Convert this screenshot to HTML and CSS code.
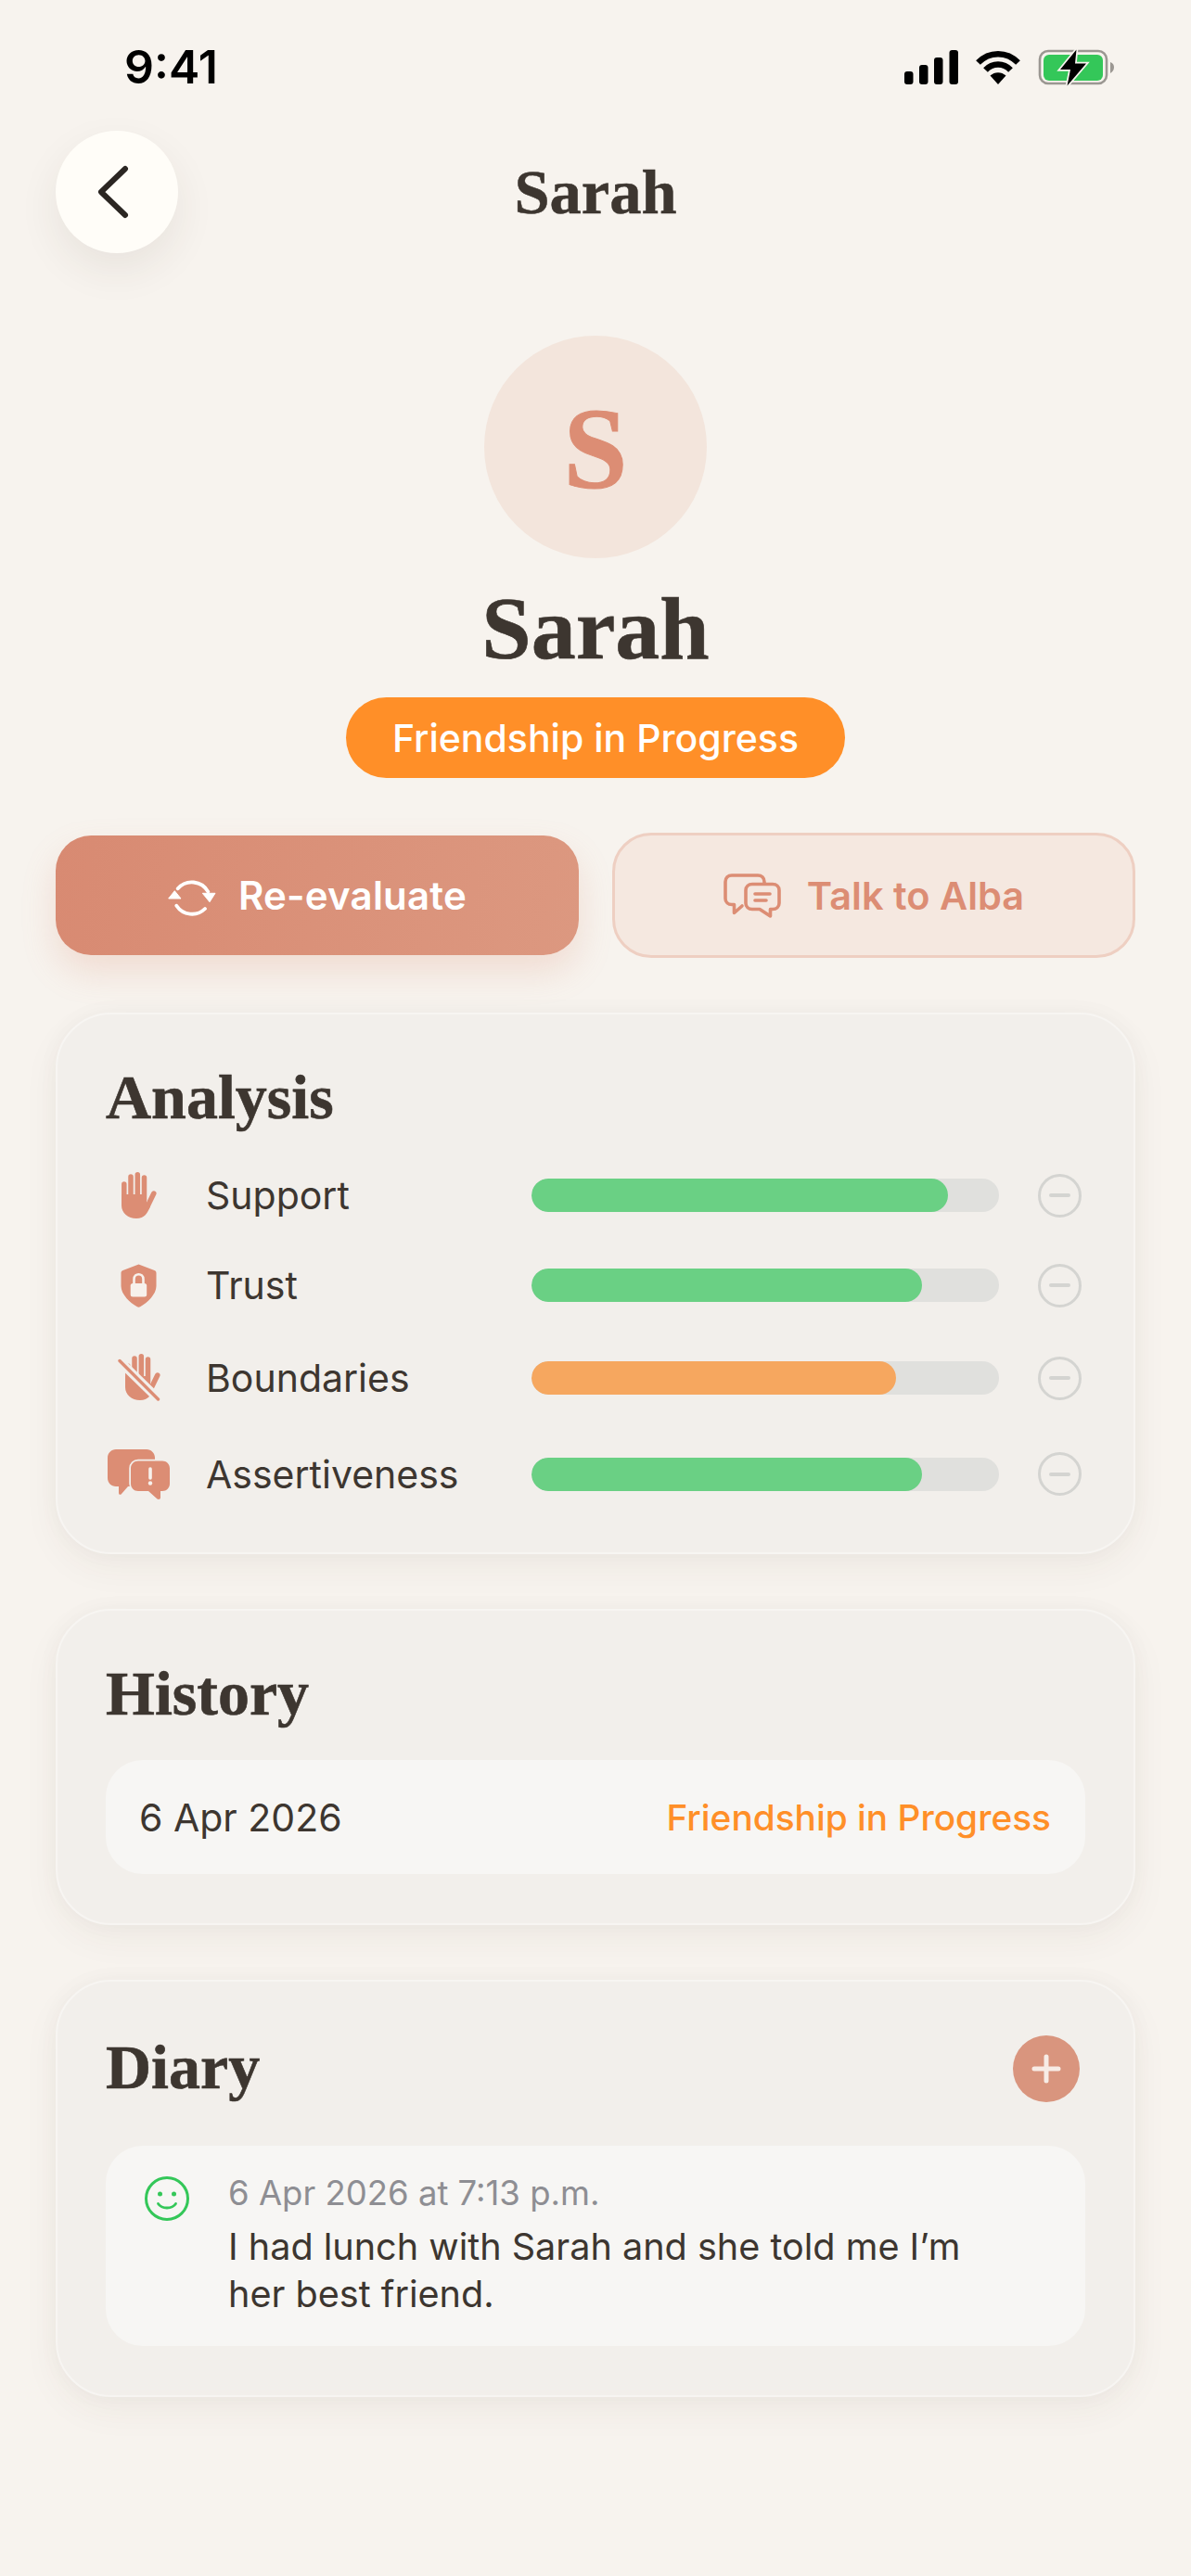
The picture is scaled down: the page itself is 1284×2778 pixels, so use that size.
FILE: index.html
```html
<!DOCTYPE html>
<html lang="en">
<head>
    <meta charset="UTF-8">
    <title>Sarah</title>
    <link rel="stylesheet" href="styles.css">
</head>
<body>

<div class="page">

    <!-- Status bar -->
    <div class="status">
        <span class="time">9:41</span>
        <div class="status-icons">
            <svg class="signal" viewBox="0 0 58 37">
                <rect x="0" y="23" width="9.5" height="14" rx="3"/>
                <rect x="16" y="16" width="9.5" height="21" rx="3"/>
                <rect x="32" y="8" width="9.5" height="29" rx="3"/>
                <rect x="48.5" y="0" width="9.5" height="37" rx="3"/>
            </svg>
            <svg class="wifi" viewBox="0 0 50 37">
                <path d="M3.5 13.5C15.5 1 34.5 1 46.5 13.5" fill="none" stroke="#000" stroke-width="6.5"/>
                <path d="M11.5 21.5C19 13.5 31 13.5 38.5 21.5" fill="none" stroke="#000" stroke-width="6.5"/>
                <path d="M25 37L16.5 27.5C21.5 23 28.5 23 33.5 27.5Z"/>
            </svg>
            <svg class="battery" viewBox="0 0 84 44">
                <rect x="2" y="5" width="72" height="35" rx="9" fill="none" stroke="#9b9792" stroke-width="2.6"/>
                <rect x="6" y="9" width="64" height="28" rx="6" fill="#34c759"/>
                <path d="M78 17C81 18 82 20 82 22.5S81 27 78 29Z" fill="#9b9792"/>
                <path d="M41.5 3.5L24 25H35L31.5 42.5L52 18.5H40Z" stroke="#f7f3ee" stroke-width="3.5" paint-order="stroke"/>
            </svg>
        </div>
    </div>

    <!-- Header -->
    <div class="header">
        <button class="back">
            <svg viewBox="0 0 34 58"><path d="M30 4L4 29L30 54" fill="none" stroke="#2b2622" stroke-width="6" stroke-linecap="round" stroke-linejoin="round"/></svg>
        </button>
        <div class="header-title">Sarah</div>
    </div>

    <!-- Profile -->
    <div class="profile">
        <div class="avatar">S</div>
        <h1>Sarah</h1>
        <div class="badge">Friendship in Progress</div>
    </div>

    <!-- Actions -->
    <div class="actions">
        <button class="btn btn-primary">
            <svg class="icon-refresh" viewBox="0 0 52 44">
                <path d="M10.7 14.3A20 20 0 0 1 43.3 17.7M40 36A20 20 0 0 1 9.3 32.7" fill="none" stroke="#fff" stroke-width="3.8" stroke-linecap="round"/>
                <path d="M37.3 19.3H51L45 28.7ZM.7 25H14L7.3 16.7Z" fill="#fff" stroke="#fff" stroke-linejoin="round"/>
            </svg>
            Re-evaluate
        </button>
        <button class="btn btn-outline">
            <svg class="icon-talk" viewBox="0 0 62 48">
                <g fill="none" stroke="#dc8d74" stroke-width="3.6" stroke-linecap="round" stroke-linejoin="round">
                    <path d="M44 10V9C44 4.5 41 2 37 2H9C5 2 2 4.5 2 9V27C2 31 5 33.5 9 33.5H11.5V42.5L20 35"/>
                    <path d="M31 11.5H53C57 11.5 60 14 60 18V32C60 36 57 38.5 53 38.5H50.5V46L39 38.5H31C27 38.5 24 36 24 32V18C24 14 27 11.5 31 11.5Z"/>
                    <path d="M34 22H50M34 29H46"/>
                </g>
            </svg>
            Talk to Alba
        </button>
    </div>

    <!-- Analysis -->
    <div class="card card-analysis">
        <h2>Analysis</h2>
        <div class="scores">
            <div class="score">
                <div class="score-icon">
                    <svg class="icon-hand" viewBox="0 0 38 50">
                        <g stroke="#dc8d74" stroke-width="5.5" stroke-linecap="round" fill="none">
                            <path d="M2.8 13V30M10 5V30M17.3 2.8V30M24.5 6V30M27.5 38L34.8 23"/>
                        </g>
                        <path d="M0 24H27V34L31 37C28 44 25 50 16 50C7 50 0 44 0 36Z" fill="#dc8d74"/>
                    </svg>
                </div>
                <span class="score-label">Support</span>
                <div class="track"><div class="fill fill-green" style="width: 89%"></div></div>
                <span class="minus"></span>
            </div>
            <div class="score">
                <div class="score-icon">
                    <svg class="icon-shield" viewBox="0 0 39 47">
                        <path d="M19.5 .5L36.5 7C38 7.6 38.5 8.5 38.5 10V24C38.5 33 28.5 42 21.5 46C20 46.9 19 46.9 17.5 46C10.5 42 .5 33 .5 24V10C.5 8.5 1 7.6 2.5 7Z" fill="#dc8d74"/>
                        <rect x="10.7" y="21" width="17.5" height="14.5" rx="2.5" fill="#f7f1ec"/>
                        <path d="M14.5 22V16.5C14.5 9.5 24.5 9.5 24.5 16.5V22" fill="none" stroke="#f7f1ec" stroke-width="2.6"/>
                    </svg>
                </div>
                <span class="score-label">Trust</span>
                <div class="track"><div class="fill fill-green" style="width: 83.5%"></div></div>
                <span class="minus"></span>
            </div>
            <div class="score">
                <div class="score-icon">
                    <svg class="icon-nohand" viewBox="0 0 46 52">
                        <g stroke="#dc8d74" stroke-width="5.5" stroke-linecap="round" fill="none">
                            <path d="M10.8 13V30M18 5V30M25.3 2.8V30M32.5 6V30M35.5 38L42.8 23"/>
                        </g>
                        <path d="M8 24H35V34L39 37C36 44 33 50 24 50C15 50 8 44 8 36Z" fill="#dc8d74"/>
                        <path d="M1 7L44 49" stroke="#f2efeb" stroke-width="9.5"/>
                        <path d="M2 7.5L43.5 49" stroke="#dc8d74" stroke-width="3.4" stroke-linecap="round"/>
                    </svg>
                </div>
                <span class="score-label">Boundaries</span>
                <div class="track"><div class="fill fill-orange" style="width: 78%"></div></div>
                <span class="minus"></span>
            </div>
            <div class="score">
                <div class="score-icon">
                    <svg class="icon-alert" viewBox="0 0 67 54">
                        <path d="M9 0H42C47 0 51 4 51 9V31C51 36 47 40 42 40H22L15 48C14 49.5 12 49 12 47V40H9C4 40 0 36 0 31V9C0 4 4 0 9 0Z" fill="#dc8d74"/>
                        <path d="M33 12.5H59C63.5 12.5 67 16 67 20.5V37C67 41.5 63.5 45 59 45H57V52C57 54 55 54.5 53.5 53.5L44 45H33C28.5 45 25 41.5 25 37V20.5C25 16 28.5 12.5 33 12.5Z" fill="#dc8d74" stroke="#f2efeb" stroke-width="3.5" paint-order="stroke"/>
                        <path d="M46 21V31" stroke="#f7f1ec" stroke-width="3.6" stroke-linecap="round"/>
                        <circle cx="46" cy="36.5" r="2.2" fill="#f7f1ec"/>
                    </svg>
                </div>
                <span class="score-label">Assertiveness</span>
                <div class="track"><div class="fill fill-green" style="width: 83.5%"></div></div>
                <span class="minus"></span>
            </div>
        </div>
    </div>

    <!-- History -->
    <div class="card card-history">
        <h2>History</h2>
        <div class="history-row">
            <span class="history-date">6 Apr 2026</span>
            <span class="history-status">Friendship in Progress</span>
        </div>
    </div>

    <!-- Diary -->
    <div class="card card-diary">
        <div class="diary-head">
            <h2>Diary</h2>
            <button class="add">
                <svg viewBox="0 0 32 32"><path d="M16 3V29M3 16H29" stroke="#f7ece6" stroke-width="5" stroke-linecap="round"/></svg>
            </button>
        </div>
        <div class="entry">
            <svg class="smile" viewBox="0 0 48 48">
                <circle cx="24" cy="24" r="22.5" fill="none" stroke="#34c759" stroke-width="3"/>
                <circle cx="16.5" cy="19" r="2.5" fill="#34c759"/>
                <circle cx="31.5" cy="19" r="2.5" fill="#34c759"/>
                <path d="M14.5 29.5C18.5 35.5 29.5 35.5 33.5 29.5" fill="none" stroke="#34c759" stroke-width="2.8" stroke-linecap="round"/>
            </svg>
            <div class="entry-body">
                <div class="entry-date">6 Apr 2026 at 7:13 p.m.</div>
                <p>I had lunch with Sarah and she told me I’m her best friend.</p>
            </div>
        </div>
    </div>

</div>

</body>
</html>
```

FILE: styles.css
```css
* {
    box-sizing: border-box;
}

body {
    margin: 0;
    font-family: 'Inter', 'Liberation Sans', sans-serif;
    background: #f7f3ee;
    color: #3d3630;
}

button {
    font-family: inherit;
    border: none;
    padding: 0;
}

h1, h2 {
    margin: 0;
    font-family: 'Liberation Serif', serif;
    font-weight: 700;
    color: #3d3630;
    -webkit-text-stroke: 0.6px #3d3630;
}

.page {
    width: 1284px;
    height: 2778px;
    padding: 0 60px;
    overflow: hidden;
}

/* Status bar */
.status {
    height: 141px;
    margin: 0 21px 0 74px;
    padding-top: 46px;
    display: flex;
    justify-content: space-between;
    align-items: flex-start;
}

.time {
    font-size: 50px;
    line-height: 52px;
    font-weight: 600;
    color: #000;
}

.status-icons {
    display: flex;
    align-items: center;
    gap: 18px;
    margin-top: 4px;
}

.signal {
    width: 58px;
    height: 37px;
}

.wifi {
    width: 50px;
    height: 37px;
}

.battery {
    width: 84px;
    height: 44px;
}

/* Header */
.header {
    height: 132px;
    position: relative;
    display: flex;
    align-items: center;
    justify-content: center;
}

.back {
    position: absolute;
    left: 0;
    top: 0;
    width: 132px;
    height: 132px;
    border-radius: 50%;
    background: #fffdf8;
    box-shadow: 0 18px 44px rgba(70, 55, 40, 0.08);
    display: flex;
    align-items: center;
    justify-content: center;
}

.back svg {
    width: 34px;
    height: 58px;
    margin-right: 9px;
}

.header-title {
    font-family: 'Liberation Serif', serif;
    font-weight: 700;
    font-size: 68.5px;
    line-height: 132px;
    color: #3d3630;
    -webkit-text-stroke: 0.5px #3d3630;
}

/* Profile */
.profile {
    margin-top: 89px;
    display: flex;
    flex-direction: column;
    align-items: center;
}

.avatar {
    width: 240px;
    height: 240px;
    padding-top: 5px;
    border-radius: 50%;
    background: #f3e5dc;
    color: #dc8d74;
    font-family: 'Liberation Serif', serif;
    font-weight: 700;
    font-size: 124px;
    -webkit-text-stroke: 1px #dc8d74;
    display: flex;
    align-items: center;
    justify-content: center;
}

.profile h1 {
    margin-top: 26px;
    font-size: 96px;
    line-height: 100px;
}

.badge {
    margin-top: 24px;
    width: 538px;
    height: 87px;
    border-radius: 44px;
    background: #ff8f28;
    color: #fff;
    font-size: 41px;
    font-weight: 500;
    display: flex;
    align-items: center;
    justify-content: center;
}

/* Actions */
.actions {
    margin-top: 59px;
    display: flex;
    gap: 36px;
    align-items: center;
}

.btn {
    flex: 0 0 564px;
    font-size: 42px;
    font-weight: 600;
    display: flex;
    align-items: center;
    justify-content: center;
    gap: 24px;
}

.btn-primary {
    height: 129px;
    border-radius: 38px;
    color: #fff;
    letter-spacing: 0.2px;
    background: linear-gradient(100deg, #d88a72, #dc9880);
    box-shadow: 0 18px 36px rgba(217, 139, 115, 0.22);
}

.btn-outline {
    height: 135px;
    border-radius: 42px;
    font-size: 41.5px;
    color: #dc8d74;
    background: #f5e8e0;
    border: 3px solid #eecfc2;
    gap: 28px;
}

.icon-refresh {
    width: 52px;
    height: 44px;
}

.icon-talk {
    width: 62px;
    height: 48px;
}

/* Cards */
.card {
    margin-top: 59px;
    padding: 0 52px 52px;
    border-radius: 60px;
    background: #f2efeb;
    border: 2px solid #f7f5f2;
    box-shadow: 0 14px 40px rgba(70, 55, 40, 0.05), 0 0 24px rgba(70, 55, 40, 0.03);
}

.card h2 {
    font-size: 68px;
    line-height: 70px;
}

.card-analysis {
    height: 584px;
    padding-top: 54px;
}

.scores {
    margin-top: 46px;
    display: grid;
    grid-template-rows: 50px 56px 56px 63px;
    gap: 44px;
}

.score {
    display: flex;
    align-items: center;
}

.score-icon {
    width: 71px;
    margin-right: 37px;
    flex-shrink: 0;
    display: flex;
    justify-content: center;
}

.score-label {
    width: 351px;
    font-size: 41px;
}

.track {
    width: 504px;
    height: 36px;
    border-radius: 18px;
    background: #e0e0dd;
    overflow: hidden;
}

.fill {
    height: 100%;
    border-radius: 18px;
}

.fill-green {
    background: #6ad084;
}

.fill-orange {
    background: #f6a75f;
}

.minus {
    width: 47px;
    height: 47px;
    margin-left: 42px;
    border-radius: 50%;
    border: 3px solid #d4d4d1;
    display: flex;
    align-items: center;
    justify-content: center;
}

.minus::before {
    content: "";
    width: 23px;
    height: 4px;
    border-radius: 2px;
    background: #d4d4d1;
}

.icon-hand {
    width: 38px;
    height: 50px;
}

.icon-shield {
    width: 39px;
    height: 47px;
}

.icon-nohand {
    width: 46px;
    height: 52px;
}

.icon-alert {
    width: 67px;
    height: 54px;
}

/* History */
.card-history {
    height: 341px;
    padding-top: 54px;
}

.history-row {
    margin-top: 37px;
    height: 123px;
    padding: 0 37px 0 36px;
    border-radius: 40px;
    background: #f7f6f4;
    display: flex;
    align-items: center;
    justify-content: space-between;
}

.history-date {
    font-size: 41px;
}

.history-status {
    font-size: 38.8px;
    font-weight: 500;
    color: #ff8f28;
}

/* Diary */
.card-diary {
    height: 450px;
    padding-top: 58px;
}

.diary-head {
    height: 72px;
    display: flex;
    align-items: center;
    justify-content: space-between;
    padding-right: 6px;
}

.diary-head h2 {
    margin-bottom: 4px;
}

.add {
    width: 72px;
    height: 72px;
    border-radius: 50%;
    background: #d9957e;
    display: flex;
    align-items: center;
    justify-content: center;
}

.add svg {
    width: 32px;
    height: 32px;
}

.entry {
    margin-top: 47px;
    height: 216px;
    padding: 33px 80px 0 42px;
    border-radius: 40px;
    background: #f7f6f4;
    display: flex;
    gap: 42px;
}

.smile {
    width: 48px;
    height: 48px;
    flex-shrink: 0;
}

.entry-date {
    font-size: 36.5px;
    line-height: 36px;
    color: #8e8e93;
}

.entry-body p {
    margin: 15px 0 0;
    font-size: 39.6px;
    line-height: 51px;
}
```
